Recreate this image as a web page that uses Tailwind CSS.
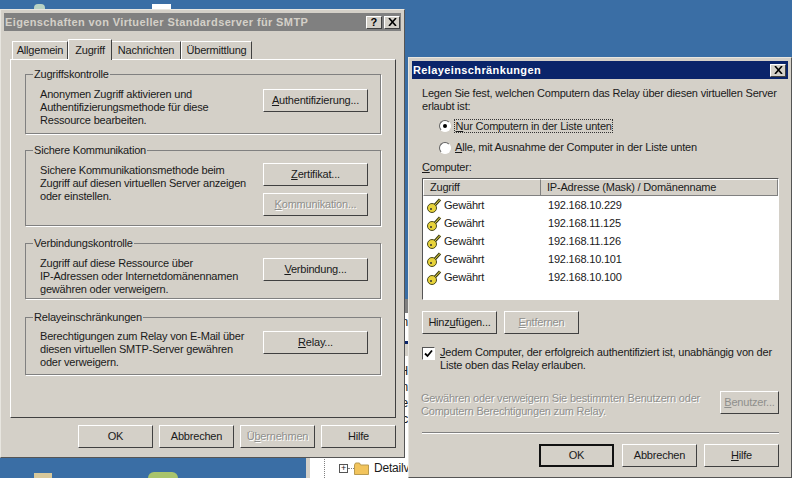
<!DOCTYPE html>
<html lang="de">
  <head>
    <meta charset="UTF-8" />
    <title>Relayeinschränkungen</title>
    <script src="https://cdn.jsdelivr.net/npm/@tailwindcss/browser@4"></script>
  </head>
  <body class="relative w-[792px] h-[478px] overflow-hidden bg-[#3a6ea5] font-['Liberation_Sans',sans-serif] text-[11px] leading-[13px] tracking-[-0.2px] text-[#1a1a1a]">
    <!-- desktop icons behind the windows -->
    <div class="absolute left-[34px] top-[4px] w-[11px] h-[6px] bg-[#b9d3c4] rounded-t-sm"></div>
    <div class="absolute left-[152px] top-[4px] w-[19px] h-[6px] bg-white"></div>
    <div class="absolute left-[34px] top-[473px] w-[18px] h-[5px] bg-[#d8c89a]"></div>
    <div class="absolute left-[148px] top-[472px] w-[30px] h-[6px] bg-[#a9c46c] rounded-t-full"></div>

    <!-- explorer window behind -->
    <div class="absolute left-[306px] top-[299px] w-[102px] h-[179px] overflow-hidden bg-white border-l-[4px] border-[#d4d0c8]">
      <div class="h-[14px] bg-[#808080]"></div>
      <div class="mt-[28px] h-[3px] bg-[#0a246a]"></div>
      <div class="h-[13px] bg-[#d4d0c8] border-b border-white"></div>
      <div class="absolute right-0 top-[17px] text-[12px] leading-[13px]">n</div>
      <div class="absolute right-0 top-[66px] text-[12px] leading-[13px]">H</div>
      <div class="absolute right-0 top-[82px] text-[12px] leading-[13px]">n</div>
      <div class="absolute right-0 top-[98px] text-[12px] leading-[13px]">e</div>
      <div class="absolute right-0 top-[114px] text-[12px] leading-[13px]">c</div>
      <div class="absolute left-[14px] top-[158px] h-[21px] border-l border-dotted border-[#808080]"></div>
      <div class="absolute left-[29px] top-[163px] flex items-center">
        <span class="flex items-center justify-center w-[9px] h-[9px] border border-[#555] text-[9px] leading-none">+</span>
        <span class="w-[6px] border-t border-dotted border-[#808080]"></span>
        <svg class="w-[15px] h-[13px]" viewBox="0 0 15 13"><path d="M0.5 3l1-2h4l1 2h8v9.500h-14z" fill="#f2c45c" stroke="#b89a50" /></svg>
        <span class="ml-[5px] text-[12px]">Detailv</span>
      </div>
    </div>

    <!-- Eigenschaften dialog -->
    <div class="absolute left-0 top-[9px] w-[405px] h-[449px] bg-[#d4d0c8] border border-t-[#e8e6e0] border-l-[#e8e6e0] border-r-[#555] border-b-[#555] p-[3px]">
      <div class="flex items-center justify-between h-[18px] pl-[1px] pr-[1px] bg-[#808080] text-[#d4d0c8] font-bold tracking-[0.38px]">
        <span class="whitespace-nowrap">Eigenschaften von Virtueller Standardserver für SMTP</span>
        <div class="flex gap-[2px]">
          <span class="flex items-center justify-center w-[16px] h-[13px] bg-[#d4d0c8] text-black border border-t-white border-l-white border-r-[#404040] border-b-[#404040]">?</span>
          <span class="flex items-center justify-center w-[16px] h-[13px] bg-[#d4d0c8] border border-t-white border-l-white border-r-[#404040] border-b-[#404040]">
            <svg class="w-[9px] h-[8px]" viewBox="0 0 9 8"><path d="M1 0l7 8M8 0L1 8" stroke="#000" stroke-width="1.6" /></svg>
          </span>
        </div>
      </div>
      <!-- tabs -->
      <div class="flex items-end h-[28px] pl-[8px]">
        <div class="flex items-center justify-center w-[56px] h-[18px] border-t border-l border-white border-r border-r-[#404040]">Allgemein</div>
        <div class="flex items-center justify-center w-[44px] h-[21px] -mb-px z-10 bg-[#d4d0c8] border-t border-l border-white border-r border-r-[#404040]">Zugriff</div>
        <div class="flex items-center justify-center w-[69px] h-[18px] border-t border-white border-r border-r-[#404040]">Nachrichten</div>
        <div class="flex items-center justify-center w-[71px] h-[18px] border-t border-l border-white border-r border-r-[#404040]">Übermittlung</div>
      </div>
      <!-- tab panel -->
      <div class="ml-[6px] w-[386px] h-[359px] px-[14px] pt-[14px] border border-t-white border-l-white border-r-[#404040] border-b-[#404040]">
        <section class="relative h-[60px] border border-[#808080] shadow-[1px_1px_0_#fff] flex justify-between pl-[14px] pr-[12px] pt-[13px]">
          <span class="absolute left-[7px] -top-[7px] bg-[#d4d0c8] px-[1px]">Zugriffskontrolle</span>
          <p class="whitespace-nowrap">Anonymen Zugriff aktivieren und<br />Authentifizierungsmethode für diese<br />Ressource bearbeiten.</p>
          <div class="mt-[1px]"><button class="w-[105px] h-[23px] border border-t-white border-l-white border-r-[#404040] border-b-[#404040]"><u>A</u>uthentifizierung...</button></div>
        </section>
        <section class="relative mt-[16px] h-[76px] border border-[#808080] shadow-[1px_1px_0_#fff] flex justify-between pl-[14px] pr-[12px] pt-[13px]">
          <span class="absolute left-[7px] -top-[7px] bg-[#d4d0c8] px-[1px]">Sichere Kommunikation</span>
          <p class="whitespace-nowrap">Sichere Kommunikationsmethode beim<br />Zugriff auf diesen virtuellen Server anzeigen<br />oder einstellen.</p>
          <div class="flex flex-col gap-[7px] -mt-[1px]">
            <button class="w-[105px] h-[23px] border border-t-white border-l-white border-r-[#404040] border-b-[#404040]"><u>Z</u>ertifikat...</button>
            <button class="w-[105px] h-[23px] border border-t-white border-l-white border-r-[#404040] border-b-[#404040] text-[#8f8f8c] [text-shadow:1px_1px_0_#fff]"><u>K</u>ommunikation...</button>
          </div>
        </section>
        <section class="relative mt-[17px] h-[56px] border border-[#808080] shadow-[1px_1px_0_#fff] flex justify-between pl-[14px] pr-[12px] pt-[13px]">
          <span class="absolute left-[7px] -top-[7px] bg-[#d4d0c8] px-[1px]">Verbindungskontrolle</span>
          <p class="whitespace-nowrap">Zugriff auf diese Ressource über<br />IP-Adressen oder Internetdomänennamen<br />gewähren oder verweigern.</p>
          <div class="mt-[1px]"><button class="w-[105px] h-[23px] border border-t-white border-l-white border-r-[#404040] border-b-[#404040]"><u>V</u>erbindung...</button></div>
        </section>
        <section class="relative mt-[18px] h-[58px] border border-[#808080] shadow-[1px_1px_0_#fff] flex justify-between pl-[14px] pr-[12px] pt-[12px]">
          <span class="absolute left-[7px] -top-[7px] bg-[#d4d0c8] px-[1px]">Relayeinschränkungen</span>
          <p class="whitespace-nowrap">Berechtigungen zum Relay von E-Mail über<br />diesen virtuellen SMTP-Server gewähren<br />oder verweigern.</p>
          <div class="mt-[1px]"><button class="w-[105px] h-[23px] border border-t-white border-l-white border-r-[#404040] border-b-[#404040]"><u>R</u>elay...</button></div>
        </section>
      </div>
      <div class="flex justify-end gap-[6px] pr-[5px] mt-[7px]">
        <button class="w-[75px] h-[23px] border border-t-white border-l-white border-r-[#404040] border-b-[#404040]">OK</button>
        <button class="w-[75px] h-[23px] border border-t-white border-l-white border-r-[#404040] border-b-[#404040]">Abbrechen</button>
        <button class="w-[75px] h-[23px] border border-t-white border-l-white border-r-[#404040] border-b-[#404040] text-[#8f8f8c] [text-shadow:1px_1px_0_#fff]">Ü<u>b</u>ernehmen</button>
        <button class="w-[75px] h-[23px] border border-t-white border-l-white border-r-[#404040] border-b-[#404040]">Hilfe</button>
      </div>
    </div>

    <!-- Relayeinschraenkungen dialog -->
    <div class="absolute left-[408px] top-[57px] w-[384px] h-[421px] bg-[#d4d0c8] border border-t-[#e8e6e0] border-l-[#e8e6e0] border-r-[#555] border-b-[#555] p-[3px]">
      <div class="flex items-center justify-between h-[18px] pl-[1px] pr-[2px] bg-[#0a246a] text-white font-bold tracking-[0.38px]">
        <span>Relayeinschränkungen</span>
        <span class="flex items-center justify-center w-[16px] h-[13px] bg-[#d4d0c8] border border-t-white border-l-white border-r-[#404040] border-b-[#404040]">
          <svg class="w-[9px] h-[8px]" viewBox="0 0 9 8"><path d="M1 0l7 8M8 0L1 8" stroke="#000" stroke-width="1.6" /></svg>
        </span>
      </div>
      <div class="pl-[10px] pr-[9px] pt-[8px]">
        <p class="whitespace-nowrap">Legen Sie fest, welchen Computern das Relay über diesen virtuellen Server<br />erlaubt ist:</p>
        <div class="flex items-center gap-[3px] pl-[17px] mt-[5px] h-[15px]">
          <span class="flex items-center justify-center w-[12px] h-[12px] rounded-full bg-white border border-t-[#606060] border-l-[#606060] border-r-white border-b-white"><span class="w-[4px] h-[4px] rounded-full bg-black"></span></span>
          <span class="border border-dotted border-[#333] leading-[12px] px-[0.5px]"><u>N</u>ur Computern in der Liste unten</span>
        </div>
        <div class="flex items-center gap-[4px] pl-[17px] mt-[7px] h-[15px]">
          <span class="w-[12px] h-[12px] rounded-full bg-white border border-t-[#606060] border-l-[#606060] border-r-white border-b-white"></span>
          <span><u>A</u>lle, mit Ausnahme der Computer in der Liste unten</span>
        </div>
        <p class="mt-[6px]"><u>C</u>omputer:</p>
        <div class="mt-[4px] w-[357px] h-[122px] bg-white border border-t-[#555] border-l-[#555] border-r-white border-b-white">
          <div class="flex h-[17px] bg-[#d4d0c8] leading-[15px]">
            <div class="w-[118px] pl-[6px] border-r border-b border-r-[#808080] border-b-[#808080] border-t border-t-white border-l border-l-white">Zugriff</div>
            <div class="flex-1 pl-[6px] border-r border-b border-r-[#808080] border-b-[#808080] border-t border-t-white">IP-Adresse (Mask) / Domänenname</div>
          </div>
          <ul>
            <li class="flex items-center h-[18px]">
              <svg class="ml-[4px] w-[15px] h-[16px]" viewBox="0 0 15 16"><path d="M7 9l6-6.500" stroke="#3a3a10" stroke-width="3" /><path d="M7 9l6-6.500" stroke="#f2e34a" /><circle cx="5" cy="11" r="4.500" fill="#e8d33a" stroke="#4a4a20" /><circle cx="4" cy="12" r="1" fill="#333" /></svg>
              <span class="w-[106px] pl-[2px]">Gewährt</span><span>192.168.10.229</span>
            </li>
            <li class="flex items-center h-[18px]">
              <svg class="ml-[4px] w-[15px] h-[16px]" viewBox="0 0 15 16"><path d="M7 9l6-6.500" stroke="#3a3a10" stroke-width="3" /><path d="M7 9l6-6.500" stroke="#f2e34a" /><circle cx="5" cy="11" r="4.500" fill="#e8d33a" stroke="#4a4a20" /><circle cx="4" cy="12" r="1" fill="#333" /></svg>
              <span class="w-[106px] pl-[2px]">Gewährt</span><span>192.168.11.125</span>
            </li>
            <li class="flex items-center h-[18px]">
              <svg class="ml-[4px] w-[15px] h-[16px]" viewBox="0 0 15 16"><path d="M7 9l6-6.500" stroke="#3a3a10" stroke-width="3" /><path d="M7 9l6-6.500" stroke="#f2e34a" /><circle cx="5" cy="11" r="4.500" fill="#e8d33a" stroke="#4a4a20" /><circle cx="4" cy="12" r="1" fill="#333" /></svg>
              <span class="w-[106px] pl-[2px]">Gewährt</span><span>192.168.11.126</span>
            </li>
            <li class="flex items-center h-[18px]">
              <svg class="ml-[4px] w-[15px] h-[16px]" viewBox="0 0 15 16"><path d="M7 9l6-6.500" stroke="#3a3a10" stroke-width="3" /><path d="M7 9l6-6.500" stroke="#f2e34a" /><circle cx="5" cy="11" r="4.500" fill="#e8d33a" stroke="#4a4a20" /><circle cx="4" cy="12" r="1" fill="#333" /></svg>
              <span class="w-[106px] pl-[2px]">Gewährt</span><span>192.168.10.101</span>
            </li>
            <li class="flex items-center h-[18px]">
              <svg class="ml-[4px] w-[15px] h-[16px]" viewBox="0 0 15 16"><path d="M7 9l6-6.500" stroke="#3a3a10" stroke-width="3" /><path d="M7 9l6-6.500" stroke="#f2e34a" /><circle cx="5" cy="11" r="4.500" fill="#e8d33a" stroke="#4a4a20" /><circle cx="4" cy="12" r="1" fill="#333" /></svg>
              <span class="w-[106px] pl-[2px]">Gewährt</span><span>192.168.10.100</span>
            </li>
          </ul>
        </div>
        <div class="flex gap-[7px] mt-[11px]">
          <button class="w-[75px] h-[23px] border border-t-white border-l-white border-r-[#404040] border-b-[#404040]">Hinz<u>u</u>fügen...</button>
          <button class="w-[75px] h-[23px] border border-t-white border-l-white border-r-[#404040] border-b-[#404040] text-[#8f8f8c] [text-shadow:1px_1px_0_#fff]"><u>E</u>ntfernen</button>
        </div>
        <div class="flex gap-[5px] mt-[12px]">
          <span class="flex items-center justify-center shrink-0 w-[13px] h-[13px] mt-[1px] bg-white border border-t-[#555] border-l-[#555] border-r-white border-b-white">
            <svg class="w-[9px] h-[9px]" viewBox="0 0 9 9"><path d="M1 4.500l2.500 2.500 4.500-5.500" fill="none" stroke="#000" stroke-width="1.800" /></svg>
          </span>
          <p class="whitespace-nowrap"><u>J</u>edem Computer, der erfolgreich authentifiziert ist, unabhängig von der<br />Liste oben das Relay erlauben.</p>
        </div>
        <div class="flex justify-between items-start mt-[19px] w-[357px] text-[#8f8f8c] [text-shadow:1px_1px_0_#fff]">
          <p class="pt-[1px] -ml-px whitespace-nowrap">Gewähren oder verweigern Sie bestimmten Benutzern oder<br />Computern Berechtigungen zum Relay.</p>
          <button class="w-[59px] h-[23px] border border-t-white border-l-white border-r-[#404040] border-b-[#404040]"><u>B</u>enutzer...</button>
        </div>
        <div class="mt-[14px] h-[2px] w-[357px] border-t border-t-[#808080] border-b border-b-white"></div>
        <div class="flex justify-end gap-[7px] mt-[10px] w-[357px]">
          <button class="w-[75px] h-[23px] border-2 border-[#111] mr-[1px]">OK</button>
          <button class="w-[75px] h-[23px] border border-t-white border-l-white border-r-[#404040] border-b-[#404040]">Abbrechen</button>
          <button class="w-[75px] h-[23px] border border-t-white border-l-white border-r-[#404040] border-b-[#404040]"><u>H</u>ilfe</button>
        </div>
      </div>
    </div>
  </body>
</html>
